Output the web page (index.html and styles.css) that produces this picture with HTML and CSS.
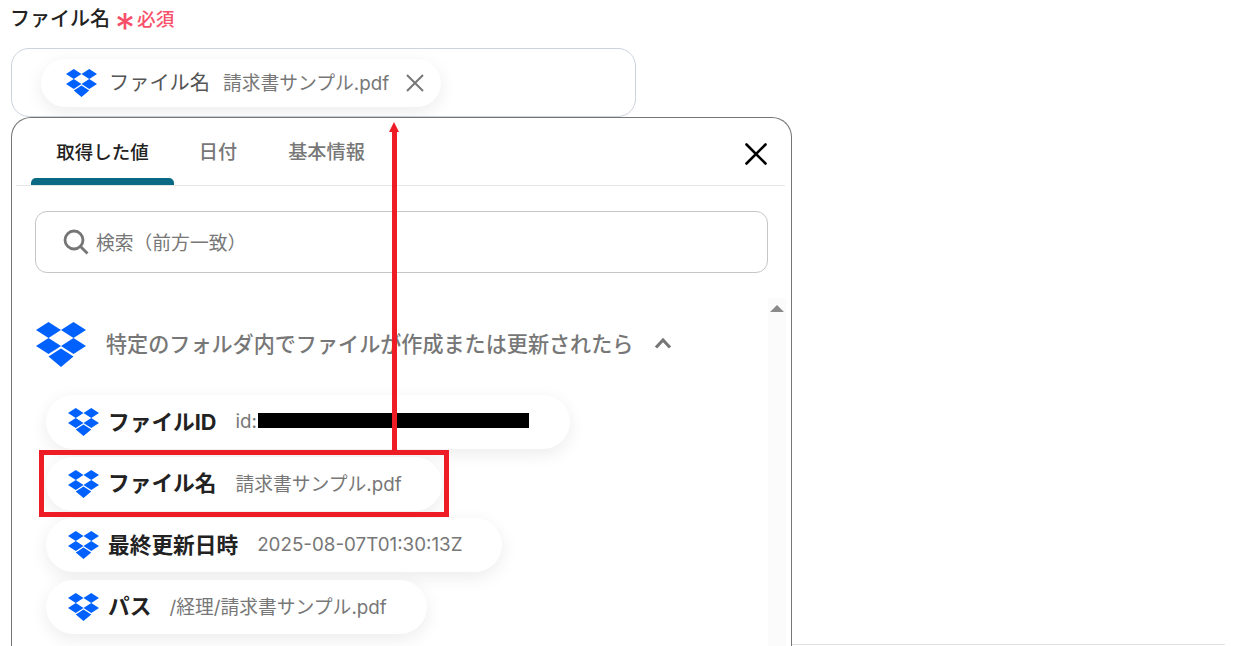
FILE: index.html
```html
<!DOCTYPE html>
<html lang="ja">
<head>
<meta charset="utf-8">
<title>ファイル名</title>
<link rel="stylesheet" href="styles.css">
</head>
<body>
<svg class="defs" width="0" height="0" aria-hidden="true">
  <symbol id="dropbox" viewBox="0 0 50 45">
    <path d="M12.5 0 25 8 12.5 16 0 8Z M37.5 0 50 8 37.5 16 25 8Z M0 24 12.5 16 25 24 12.5 32Z M37.5 16 50 24 37.5 32 25 24Z M12.5 34.5 25 26.5 37.5 34.5 25 45Z"/>
  </symbol>
</svg>
<main class="page">
  <div class="label-row">
    <span class="label">ファイル名</span>
    <span class="req-star">*</span>
    <span class="req-text">必須</span>
  </div>
  <div class="field">
    <div class="chip chip-selected">
      <svg class="dbx dbx-chip"><use href="#dropbox"/></svg>
      <span class="chip-name-light">ファイル名</span>
      <span class="chip-value">請求書サンプル.pdf</span>
      <svg class="chip-x" viewBox="0 0 20 20"><path d="M2 2 18 18M18 2 2 18"/></svg>
    </div>
  </div>
  <section class="popup">
    <div class="tabs">
      <div class="tab tab-active">取得した値</div>
      <div class="tab tab-date">日付</div>
      <div class="tab tab-info">基本情報</div>
      <svg class="popup-x" viewBox="0 0 24 24"><path d="M2.5 2.5 21.5 21.5M21.5 2.5 2.5 21.5"/></svg>
    </div>
    <div class="search">
      <svg class="search-icon" viewBox="0 0 26 26"><circle cx="11" cy="11" r="9"/><path d="M17.5 17.5 24.5 24.5"/></svg>
      <span class="search-text">検索（前方一致）</span>
    </div>
    <div class="scroll-area">
      <div class="list">
        <div class="group-head">
          <svg class="dbx dbx-head"><use href="#dropbox"/></svg>
          <span class="group-title">特定のフォルダ内でファイルが作成または更新されたら</span>
          <svg class="chevron" viewBox="0 0 18 12"><path d="M2 10.5 9 3 16 10.5"/></svg>
        </div>
        <div class="chip row w-id">
          <svg class="dbx"><use href="#dropbox"/></svg>
          <span class="chip-name">ファイルID</span>
          <span class="chip-value gap-id">id:</span><span class="redact"></span>
        </div>
        <div class="chip row w-name">
          <svg class="dbx"><use href="#dropbox"/></svg>
          <span class="chip-name">ファイル名</span>
          <span class="chip-value gap-name">請求書サンプル.pdf</span>
        </div>
        <div class="chip row w-date">
          <svg class="dbx"><use href="#dropbox"/></svg>
          <span class="chip-name">最終更新日時</span>
          <span class="chip-value gap-date">2025-08-07T01:30:13Z</span>
        </div>
        <div class="chip row w-path">
          <svg class="dbx"><use href="#dropbox"/></svg>
          <span class="chip-name">パス</span>
          <span class="chip-value gap-path">/経理/請求書サンプル.pdf</span>
        </div>
      </div>
      <div class="scrollbar"><span class="scroll-up"></span></div>
    </div>
  </section>
  <div class="bottom-line"></div>
</main>
<div class="ann-line"></div>
<div class="ann-head"></div>
<div class="ann-box"></div>
</body>
</html>
```
FILE: styles.css
```css
* { box-sizing: border-box; }
html, body { margin: 0; height: 100%; overflow: hidden; background: #fff; }
body { font-family: Inter, "Noto Sans CJK JP", sans-serif; color: #222; position: relative; }
.defs { position: absolute; }
.page { padding: 6px 0 0 11px; height: 646px; position: relative; }
.label-row { display: flex; align-items: center; height: 26px; margin-left: -1px; }
.label { font-size: 20px; font-weight: 500; color: #222; line-height: 26px; }
.req-star { font-size: 40px; line-height: 26px; color: #f8506a; margin-left: 5px; height: 26px; padding-top: 9px; font-weight: 400; }
.req-text { font-size: 18.6px; color: #f8506a; margin-left: 2px; font-weight: 500; line-height: 26px; }
.field { width: 625px; height: 69px; margin-top: 16px; border: 1px solid #ccd2de; border-radius: 18px; padding: 10px 0 0 29px; }
.chip { display: flex; align-items: center; background: #fff; border-radius: 27px; box-shadow: 0 5px 18px rgba(0,0,0,.08); }
.chip span { position: relative; top: -2px; }
.row .chip-value { top: -1px; }
.dbx { fill: #0061fe; width: 31px; height: 28px; flex: none; }
.chip-selected { width: 400px; height: 48px; padding-left: 25px; }
.chip-name-light { font-size: 20.2px; color: #555; margin-left: 12px; white-space: nowrap; }
.chip-value { font-size: 18.8px; color: #777; white-space: nowrap; }
.chip-selected .chip-value { margin-left: 13px; }
.chip-x { width: 20px; height: 20px; margin-left: 16px; stroke: #777; stroke-width: 2; fill: none; flex: none; }
.popup { width: 781px; height: 560px; border: 1px solid #757575; border-radius: 20px 20px 0 0; border-bottom: 0; background: #fff; }
.tabs { position: relative; display: flex; height: 68px; margin: 0 6px 0 4px; border-bottom: 1px solid #e4e6e8; padding-left: 15px; }
.tab { height: 67px; padding: 21px 0 0; text-align: center; font-size: 19.2px; font-weight: 500; color: #777; line-height: 27px; }
.tab-date { width: 88px; }
.tab-info { width: 129px; }
.tab-active { width: 143px; font-size: 18.5px; color: #222; position: relative; }
.tab-active::after { content: ""; position: absolute; left: 0; right: 0; bottom: 0; height: 7px; background: #0a6a85; border-radius: 5px 5px 0 0; }
.popup-x { position: absolute; right: 17px; top: 24px; width: 24px; height: 24px; stroke: #000; stroke-width: 2.6; fill: none; stroke-linecap: round; }
.search { display: flex; align-items: center; width: 733px; height: 62px; margin: 25px 0 0 23px; border: 1px solid #c6c6c6; border-radius: 12px; padding-left: 27px; font-size: 18.8px; color: #777; }
.search-text { position: relative; top: -1px; margin-left: -1px; }
.search-icon { width: 26px; height: 26px; margin-right: 8px; fill: none; stroke: #757575; stroke-width: 2.8; }
.scroll-area { display: flex; height: 348px; margin-top: 25px; }
.list { width: 757px; padding: 0 0 0 23px; }
.group-head { display: flex; align-items: center; height: 97px; padding-bottom: 8px; }
.dbx-head { width: 50px; height: 45px; margin: 3px 0 0 1px; }
.group-title { font-size: 21.1px; font-weight: 500; color: #777; margin-left: 20px; white-space: nowrap; }
.chevron { width: 18px; height: 12px; margin-left: 21px; fill: none; stroke: #777; stroke-width: 3.2; }
.row { height: 54px; margin: 0 0 7.67px 11px; padding-left: 22px; }
.row .chip-name { font-size: 21.7px; font-weight: 700; color: #222; margin-left: 9px; white-space: nowrap; }
.w-id { width: 524px; }
.w-name { width: 396px; }
.w-date { width: 456px; }
.w-path { width: 381px; }
.gap-id { margin-left: 19px; }
.gap-name { margin-left: 19px; }
.gap-date { margin-left: 19px; }
.gap-path { margin-left: 18px; }
.redact { display: block; width: 271px; height: 15px; background: #000; margin-left: 1px; }
.scrollbar { width: 18px; margin-left: -1px; background: #fbfbfb; position: relative; }
.scroll-up { position: absolute; left: 2px; top: 7px; width: 0; height: 0; border-left: 7px solid transparent; border-right: 7px solid transparent; border-bottom: 7px solid #8a8a8a; }
.bottom-line { position: absolute; left: 792px; top: 644px; width: 433px; height: 1px; background: #e2e2e2; }
.ann-line { position: absolute; left: 392px; top: 130px; width: 5px; height: 322px; background: #ee1c25; }
.ann-head { position: absolute; left: 389px; top: 122px; width: 0; height: 0; border-left: 5.5px solid transparent; border-right: 5.5px solid transparent; border-bottom: 10px solid #ee1c25; }
.ann-box { position: absolute; left: 39px; top: 450px; width: 410px; height: 67px; border: 5px solid #ee1c25; }
```
